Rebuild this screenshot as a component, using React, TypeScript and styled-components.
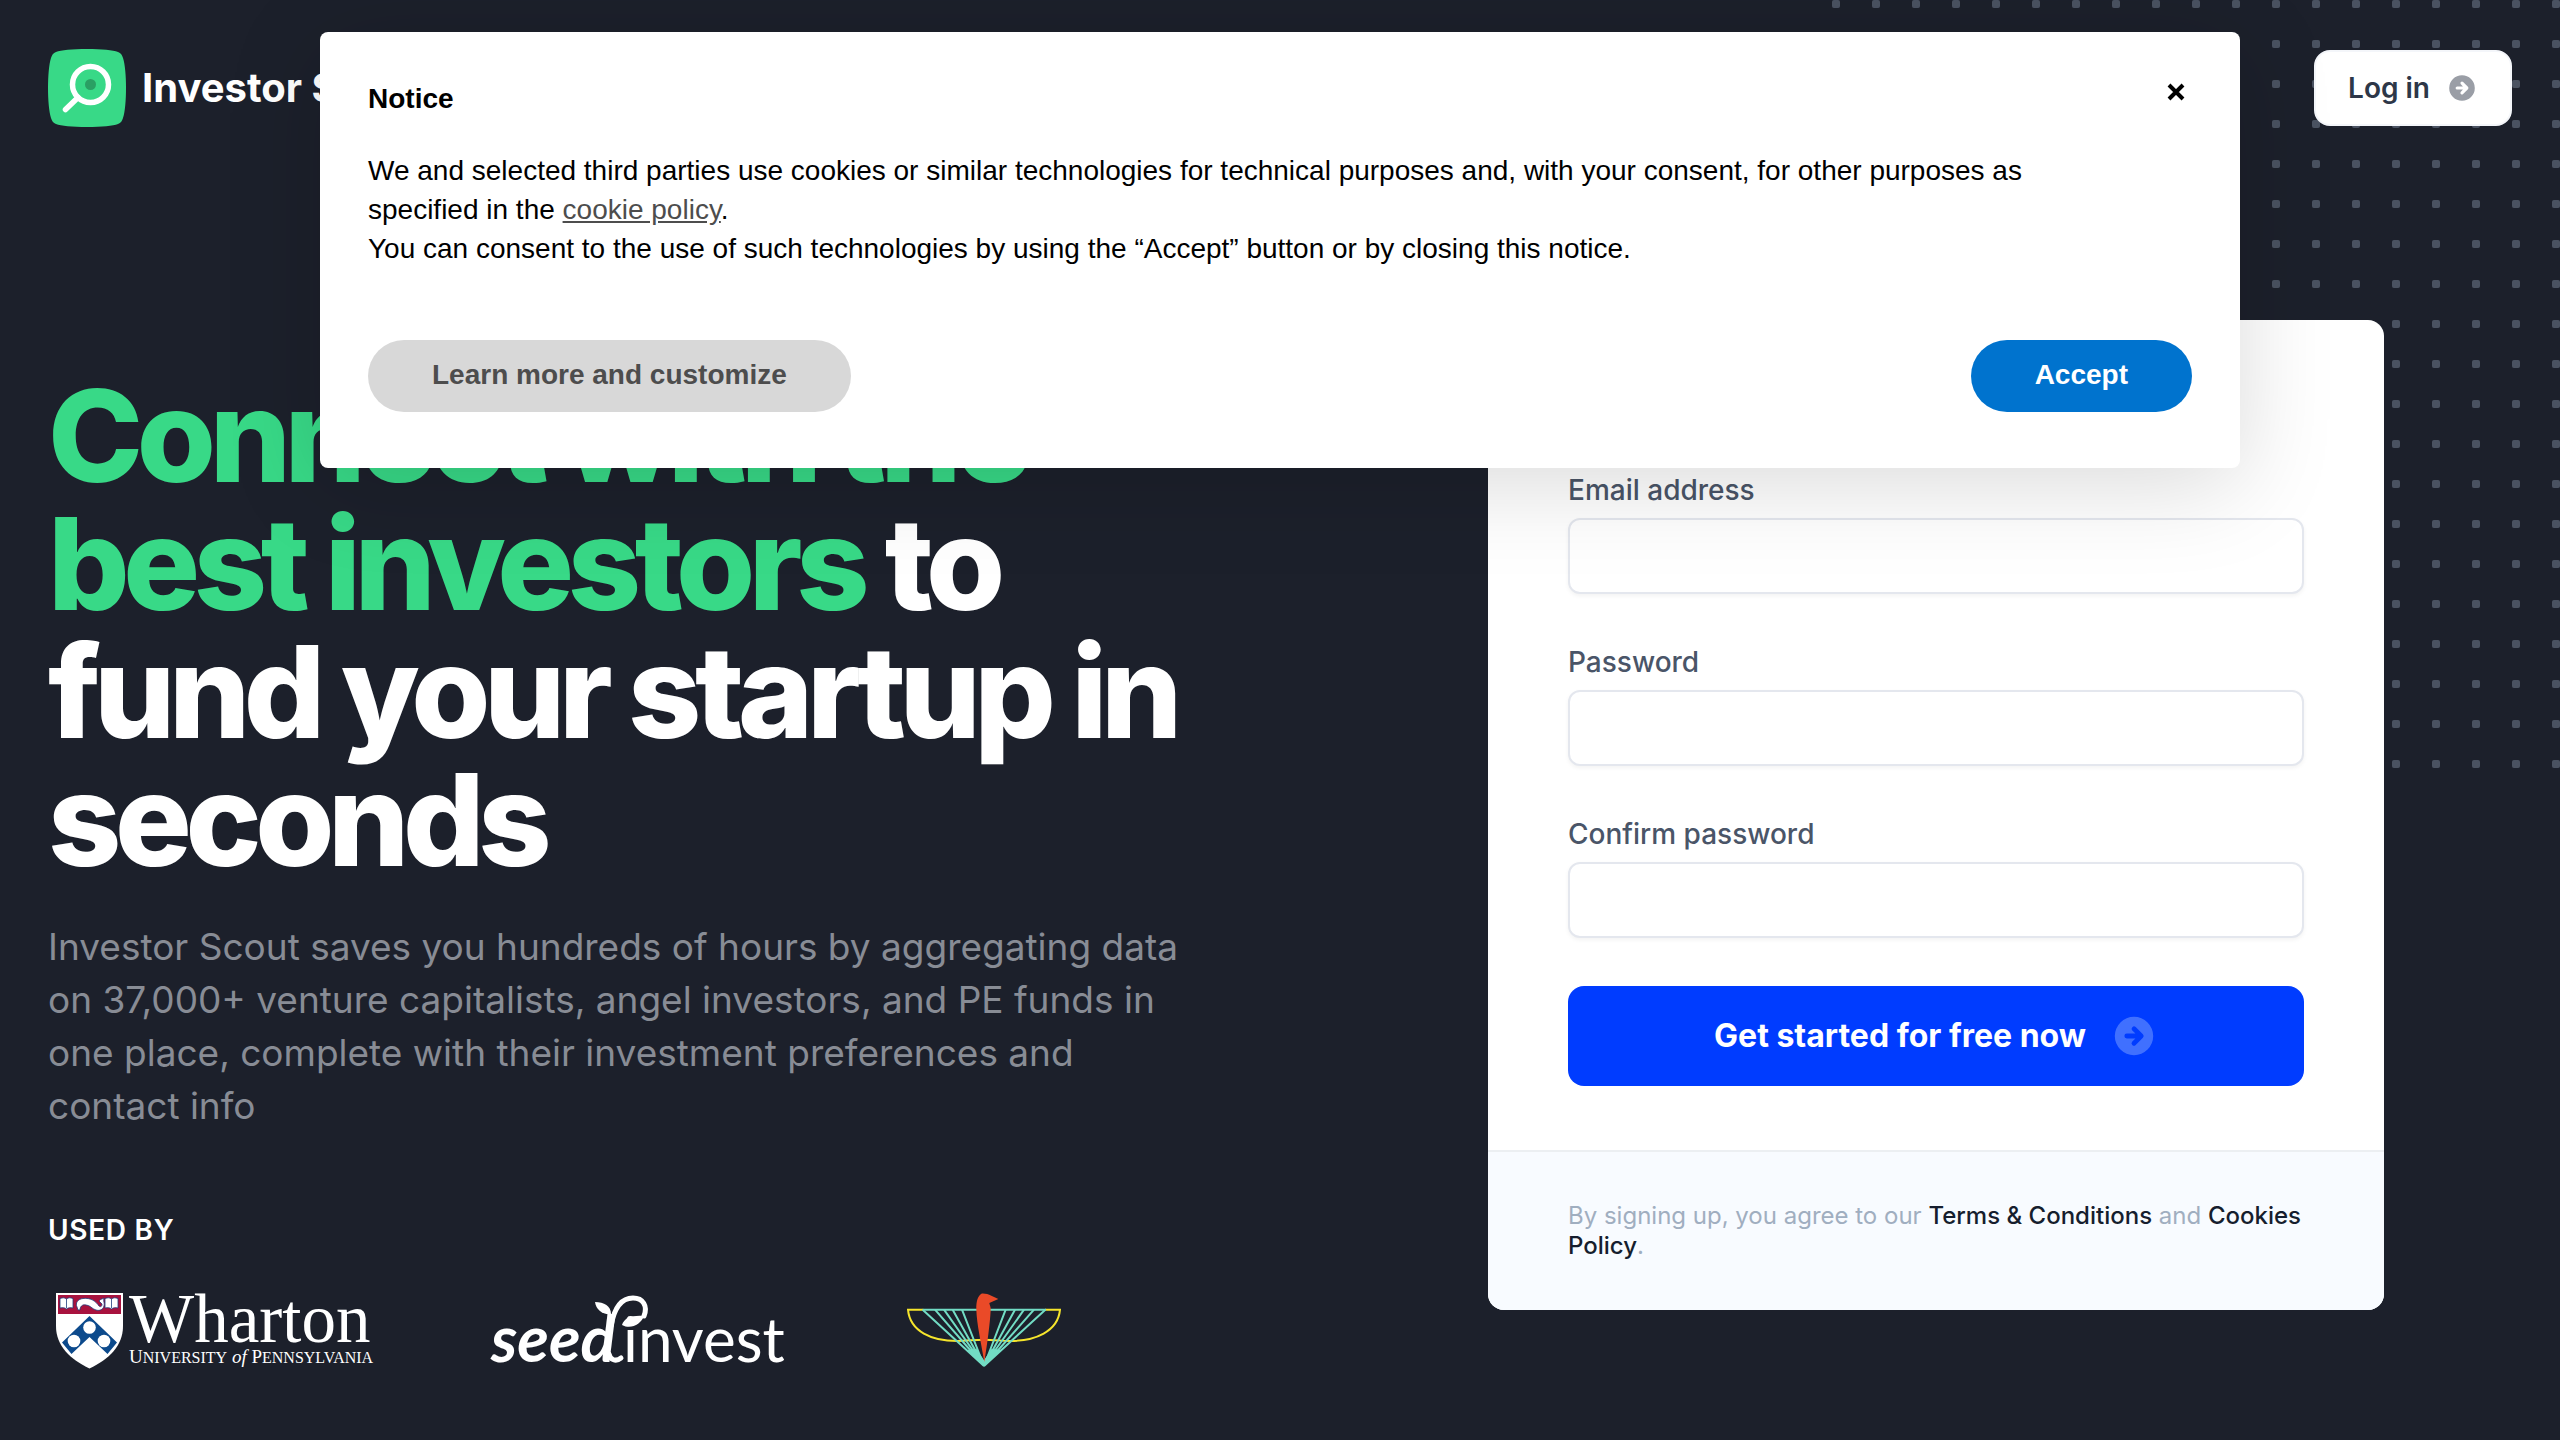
import React from "react";
import styled, { createGlobalStyle } from "styled-components";

const GlobalStyle = createGlobalStyle`
  *, *::before, *::after { box-sizing: border-box; }
  body {
    margin: 0;
    background: #1c202b;
    font-family: Inter, "Liberation Sans", sans-serif;
    -webkit-font-smoothing: antialiased;
  }
  h1, h2, p { margin: 0; }
  button, input { font: inherit; margin: 0; }
`;

const Page = styled.div`
  position: relative;
  min-height: 100vh;
  overflow: hidden;
  background: #1c202b;
`;

const DotField = styled.svg`
  position: absolute;
  top: 0;
  right: 0;
  width: 728px;
  height: 768px;
`;

const Header = styled.header`
  position: relative;
  display: flex;
  align-items: center;
  justify-content: space-between;
  padding: 48px 48px 0;
`;

const Brand = styled.a`
  display: flex;
  align-items: center;
  gap: 14px;
  color: #fff;
  font-size: 40px;
  line-height: 48px;
  font-weight: 700;
  text-decoration: none;
  svg { display: block; width: 80px; height: 80px; }
`;

const LoginButton = styled.button`
  display: flex;
  align-items: center;
  gap: 16px;
  height: 76px;
  padding: 0 32px;
  border: 2px solid #f4f6fa;
  border-radius: 16px;
  background: #fff;
  color: #2d3748;
  font-size: 28px;
  line-height: 40px;
  font-weight: 600;
  svg { width: 32px; height: 32px; fill: #9a9ea6; }
`;

const Main = styled.main`
  position: relative;
  display: grid;
  grid-template-columns: 1fr 1fr;
  gap: 160px;
  align-items: start;
  padding: 192px 48px 0;
`;

const Intro = styled.section`
  padding-top: 52px;
`;

const Headline = styled.h1`
  color: #fff;
  font-size: 128px;
  line-height: 128px;
  font-weight: 800;
  letter-spacing: -0.05em;
`;

const Highlight = styled.span`
  color: #38d987;
`;

const Lead = styled.p`
  margin-top: 36px;
  color: #888c95;
  font-size: 37px;
  line-height: 53px;
`;

const UsedBy = styled.p`
  margin-top: 78px;
  color: #fff;
  font-size: 28px;
  line-height: 40px;
  font-weight: 600;
  letter-spacing: 0.025em;
  text-transform: uppercase;
`;

const Logos = styled.div`
  display: flex;
  margin-top: 30px;
  svg { display: block; height: 110px; flex: none; }
`;

const Card = styled.form`
  justify-self: center;
  width: 100%;
  max-width: 896px;
  border-radius: 16px;
  overflow: hidden;
  background: #fff;
`;

const CardBody = styled.div`
  display: flex;
  flex-direction: column;
  gap: 48px;
  padding: 150px 80px 64px;
`;

const Field = styled.div`
  display: flex;
  flex-direction: column;
  gap: 8px;
`;

const Label = styled.label`
  color: #4a5568;
  font-size: 28px;
  line-height: 40px;
  font-weight: 500;
`;

const TextBox = styled.input`
  width: 100%;
  height: 76px;
  padding: 0 24px;
  border: 2px solid #e4e7ee;
  border-radius: 12px;
  background: #fff;
  box-shadow: 0 2px 4px rgba(0, 0, 0, 0.05);
  font-size: 28px;
  outline: none;
`;

const SubmitButton = styled.button`
  display: flex;
  align-items: center;
  justify-content: center;
  gap: 24px;
  height: 100px;
  border: 0;
  border-radius: 16px;
  background: #003cff;
  color: #fff;
  font-size: 32px;
  line-height: 48px;
  font-weight: 700;
  svg { width: 48px; height: 48px; fill: #4070ff; }
`;

const CardFooter = styled.div`
  padding: 49px 80px;
  border-top: 2px solid #eceff2;
  background: #f8fbff;
  color: #a0aec0;
  font-size: 24px;
  line-height: 30px;
  a { color: #161e2e; font-weight: 500; text-decoration: none; }
`;

const Notice = styled.section`
  position: absolute;
  top: 32px;
  left: 12.5%;
  width: 75%;
  padding: 47px 48px 56px;
  border-radius: 8px;
  background: #fff;
  box-shadow: 0 16px 96px rgba(0, 0, 0, 0.15);
  color: #000;
  font-family: "Liberation Sans", Arial, sans-serif;
  font-size: 28px;
  line-height: 39px;
`;

const NoticeHead = styled.div`
  display: flex;
  justify-content: space-between;
  align-items: flex-start;
  h2 { font-size: 28px; line-height: 39px; font-weight: 700; }
`;

const CloseButton = styled.button`
  display: flex;
  align-items: center;
  justify-content: center;
  width: 32px;
  height: 26px;
  padding: 0;
  border: 0;
  background: none;
  svg { width: 18px; height: 18px; }
`;

const NoticeText = styled.p`
  margin-top: 33px;
  padding-right: 160px;
  a { color: #4d4d4d; }
`;

const NoticeActions = styled.div`
  display: flex;
  justify-content: space-between;
  margin-top: 72px;
`;

const PillButton = styled.button<{ $primary?: boolean }>`
  height: 72px;
  padding: 0 64px 4px;
  border: 0;
  border-radius: 36px;
  background: ${(p) => (p.$primary ? "#0073ce" : "#d8d8d8")};
  color: ${(p) => (p.$primary ? "#fff" : "#4d4d4d")};
  font-weight: 700;
`;

const ArrowCircle = () => (
  <svg viewBox="0 0 20 20" aria-hidden="true">
    <path
      fillRule="evenodd"
      clipRule="evenodd"
      d="M10 18a8 8 0 100-16 8 8 0 000 16zm3.707-8.707l-3-3a1 1 0 00-1.414 1.414L10.586 9H7a1 1 0 100 2h3.586l-1.293 1.293a1 1 0 101.414 1.414l3-3a1 1 0 000-1.414z"
    />
  </svg>
);

const BrandMark = () => (
  <svg viewBox="0 0 80 80" aria-hidden="true">
    <path
      d="M39 1C54 1 65 2 70 4c3 1 4 3 5 6 2 6 3 18 3 30s-1 24-3 30c-1 3-2 5-5 6-5 2-16 3-31 3s-26-1-31-3c-3-1-4-3-5-6C1 64 0 52 0 40s1-24 3-30c1-3 2-5 5-6 5-2 16-3 31-3z"
      fill="#38d987"
    />
    <circle cx="42.500" cy="36.500" r="18" fill="none" stroke="#fff" strokeWidth="5.500" />
    <path d="M30 49.500L17.500 61.500" stroke="#fff" strokeWidth="5.500" strokeLinecap="round" />
    <circle cx="42.500" cy="36.500" r="5.500" fill="#2a9f63" />
  </svg>
);

const WhartonLogo = () => (
  <svg viewBox="0 0 400 110" width="400" role="img" aria-label="Wharton, University of Pennsylvania">
    <path d="M8 13h67v33c0 20-14 33-33.500 42.500C22 79 8 66 8 46z" fill="#fff" />
    <path d="M10 15h63v19H10z" fill="#a8123e" />
    <g fill="#fff" stroke="#1d3c7c" strokeWidth="0.800">
      <path d="M12 18.500c3-1 4.500-1 6.500.5 2-1.500 3.500-1.500 6.500-.5v9.500c-3-.5-4.500-.5-6.500 1-2-1.500-3.500-1.500-6.500-1z" />
      <path d="M57 18.500c3-1 4.500-1 6.500.5 2-1.500 3.500-1.500 6.500-.5v9.500c-3-.5-4.500-.5-6.500 1-2-1.500-3.500-1.500-6.500-1z" />
      <path d="M30 30l-1-3c-2-4 1-8 6-8.500 8-1 13 3 16 7.500 2 1.500 3 0 3-2l-3-3c1-2 4-2 5-3-1 4 1 5 0 8-1 4-5 5-8 4-4-1-6-5-10-5-4-1-6 2-6 5z" />
    </g>
    <path d="M18.500 19v9M63.500 19v9" stroke="#1d3c7c" strokeWidth="0.800" />
    <path d="M41.500 36L69 62.500l-9.500 11.500-18-17-18 17L14 62.500z" fill="#0c4a8c" />
    <circle cx="41.500" cy="47.500" r="6.300" fill="#fff" />
    <circle cx="26" cy="61" r="6.300" fill="#fff" />
    <circle cx="56" cy="61" r="6.300" fill="#fff" />
    <text x="81" y="62" fill="#fff" fontFamily="Liberation Serif, serif" fontSize="69">
      Wharton
    </text>
    <text x="81" y="83" fill="#fff" fontFamily="Liberation Serif, serif" fontSize="19">
      U<tspan fontSize="16">NIVERSITY</tspan> <tspan fontStyle="italic">of</tspan> P
      <tspan fontSize="16">ENNSYLVANIA</tspan>
    </text>
  </svg>
);

const SeedInvestLogo = () => (
  <svg viewBox="0 0 432 110" width="432" role="img" aria-label="seedinvest">
    <text x="43" y="82" fill="#fff" fontFamily="Lato, sans-serif" fontSize="65" fontWeight="700" fontStyle="italic">
      seed
    </text>
    <text x="175" y="82" fill="#fff" fontFamily="Lato, sans-serif" fontSize="62">
      invest
    </text>
    <path
      d="M163 46C166 29 173 18 185 18c10 0 15 8 11 18"
      fill="none"
      stroke="#fff"
      strokeWidth="5"
      strokeLinecap="round"
    />
    <path d="M161 74c1 6 7 8 12 4" fill="none" stroke="#fff" strokeWidth="5" strokeLinecap="round" />
    <path d="M174 45c2-7 10-10 22-9-3 8-13 14-22 9z" fill="#fff" />
    <path d="M147 22c9 0 16 4 16 12-8 1-15-4-16-12z" fill="#fff" />
  </svg>
);

const BirdLogo = () => (
  <svg viewBox="0 30 600 330" width="200" role="img" aria-label="Winged bird emblem">
    <g fill="none" stroke="#f6e52c" strokeWidth="6">
      <path d="M130 119H84c6 66 72 94 147 94 30 0 50-4 81-4s52 4 78 4c75 0 144-28 150-94h-45" />
    </g>
    <g fill="none" stroke="#72dcc4" strokeWidth="6">
      <path d="M128 119H498" />
      <path d="M128 119L312 288M165 119L312 288M192 119L312 288M218 119L312 288M246 119L312 288" />
      <path d="M377 119L312 288M405 119L312 288M432 119L312 288M462 119L312 288M496 119L312 288" />
    </g>
    <path d="M262 240L312 290L362 240L335 236L312 270L289 236z" fill="#72dcc4" />
    <path d="M289 119c-1-26 5-42 15-48 10-1 20 1 30 6l21 10-27 12c1 7 5 12 4 22-2 40-10 100-19 155-9-55-23-115-24-157z" fill="#ea4a28" />
  </svg>
);

const fields = [
  { id: "email", label: "Email address", type: "email" },
  { id: "password", label: "Password", type: "password" },
  { id: "confirm", label: "Confirm password", type: "password" },
];

export default function App() {
  return (
    <Page>
      <GlobalStyle />
      <DotField aria-hidden="true">
        <defs>
          <pattern id="dots" width="40" height="40" patternUnits="userSpaceOnUse">
            <rect width="8" height="8" rx="2" fill="#4a5261" />
          </pattern>
        </defs>
        <rect width="728" height="768" fill="url(#dots)" />
      </DotField>

      <Header>
        <Brand href="#">
          <BrandMark />
          Investor Scout
        </Brand>
        <LoginButton type="button">
          Log in
          <ArrowCircle />
        </LoginButton>
      </Header>

      <Main>
        <Intro>
          <Headline>
            <Highlight>Connect with the best investors</Highlight> to fund your startup in seconds
          </Headline>
          <Lead>
            Investor Scout saves you hundreds of hours by aggregating data on 37,000+ venture capitalists, angel
            investors, and PE funds in one place, complete with their investment preferences and contact info
          </Lead>
          <UsedBy>Used by</UsedBy>
          <Logos>
            <WhartonLogo />
            <SeedInvestLogo />
            <BirdLogo />
          </Logos>
        </Intro>

        <Card onSubmit={(e) => e.preventDefault()}>
          <CardBody>
            {fields.map((f) => (
              <Field key={f.id}>
                <Label htmlFor={f.id}>{f.label}</Label>
                <TextBox id={f.id} type={f.type} />
              </Field>
            ))}
            <SubmitButton type="submit">
              Get started for free now
              <ArrowCircle />
            </SubmitButton>
          </CardBody>
          <CardFooter>
            By signing up, you agree to our <a href="#">Terms &amp; Conditions</a> and <a href="#">Cookies Policy</a>.
          </CardFooter>
        </Card>
      </Main>

      <Notice role="dialog" aria-labelledby="notice-title">
        <NoticeHead>
          <h2 id="notice-title">Notice</h2>
          <CloseButton type="button" aria-label="Close">
            <svg viewBox="0 0 18 18" aria-hidden="true">
              <path d="M2 2L16 16M16 2L2 16" stroke="#000" strokeWidth="4" />
            </svg>
          </CloseButton>
        </NoticeHead>
        <NoticeText>
          We and selected third parties use cookies or similar technologies for technical purposes and, with your
          consent, for other purposes as specified in the <a href="#">cookie policy</a>.<br />
          You can consent to the use of such technologies by using the “Accept” button or by closing this notice.
        </NoticeText>
        <NoticeActions>
          <PillButton type="button">Learn more and customize</PillButton>
          <PillButton type="button" $primary>
            Accept
          </PillButton>
        </NoticeActions>
      </Notice>
    </Page>
  );
}
